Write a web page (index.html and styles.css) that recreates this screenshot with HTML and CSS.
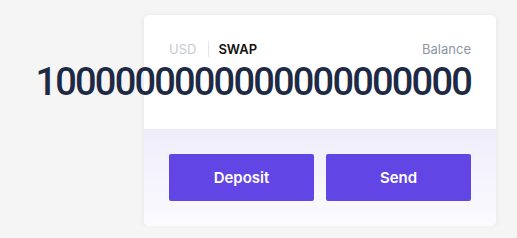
FILE: index.html
```html
<!DOCTYPE html>
<html lang="en">
<head>
    <meta charset="UTF-8">
    <title>Swap balance</title>
    <link rel="stylesheet" href="styles.css">
</head>
<body>
    <div class="card">
        <div class="card-top">
            <div class="card-head">
                <div class="units">
                    <span class="unit muted">USD</span>
                    <span class="unit active">SWAP</span>
                </div>
                <span class="label">Balance</span>
            </div>
            <div class="amount">1000000000000000000000</div>
        </div>
        <div class="card-actions">
            <button class="button">Deposit</button>
            <button class="button">Send</button>
        </div>
    </div>
</body>
</html>
```

FILE: styles.css
```css
body {
    margin: 0;
    background-color: #f5f5f5;
    font-family: Inter, "Noto Sans", sans-serif;
    padding: 15px 0 0 144px;
}

.card {
    width: 352px;
    background-color: #ffffff;
    border-radius: 5px;
    box-shadow: 0 1px 6px rgba(0, 0, 0, 0.08);
}

.card-top {
    padding: 25px 25px 0 25px;
    height: 89px;
}

.card-head {
    display: flex;
    justify-content: space-between;
    align-items: center;
    font-size: 13px;
    height: 18px;
}

.units {
    display: flex;
    align-items: center;
}

.unit.muted {
    color: #c6cad2;
    padding-right: 12px;
    border-right: 1px solid #e4e6ea;
}

.unit.active {
    color: #111111;
    font-weight: 600;
    padding-left: 9px;
}

.label {
    color: #8d96a3;
}

.amount {
    direction: rtl;
    white-space: nowrap;
    font-family: Roboto, Inter, sans-serif;
    font-size: 38px;
    font-weight: 500;
    letter-spacing: -1.8px;
    color: #1e2a45;
    line-height: 44px;
    margin-top: 2px;
}

.card-actions {
    display: grid;
    grid-template-columns: 1fr 1fr;
    gap: 12px;
    padding: 25px;
    background: linear-gradient(#efedfb, #fcfbff);
    border-radius: 0 0 5px 5px;
}

.button {
    background-color: #6246e5;
    color: white;
    border: none;
    border-radius: 2px;
    height: 47px;
    font-family: Inter, "Noto Sans", sans-serif;
    font-size: 15px;
    font-weight: 600;
    cursor: pointer;
}
```
